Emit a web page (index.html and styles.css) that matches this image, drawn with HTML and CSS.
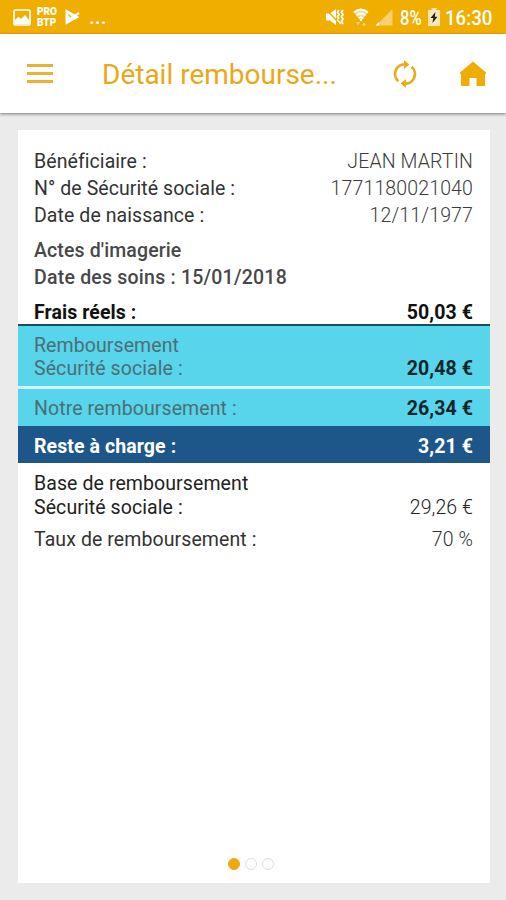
FILE: index.html
```html
<!DOCTYPE html>
<html lang="fr">
<head>
  <meta charset="UTF-8">
  <meta name="viewport" content="width=device-width, initial-scale=1">
  <title>Détail remboursement</title>
  <link rel="stylesheet" href="styles.css">
</head>
<body>

  <div class="statusbar">
    <svg class="ic-picture" width="18" height="17" viewBox="0 0 18 17">
      <rect x="1" y="1" width="16" height="15" rx="1.5" fill="none" stroke="#fff" stroke-width="1.7"/>
      <path d="M2 15V11l3.500-3.500L8 10l4-4 4 5v4z" fill="#fff"/>
    </svg>
    <div class="probtp">PRO<br>BTP</div>
    <svg class="ic-play" width="15" height="16" viewBox="0 0 15 16">
      <path d="M.5.300L14.500 8 .500 15.700z" fill="#fff"/>
      <path d="M3.500 5.500l3.500 3.500 6-5.500" fill="none" stroke="#efae00" stroke-width="1.200"/>
      <path d="M6 9.500L14 4" fill="none" stroke="#fff" stroke-width="2.200"/>
    </svg>
    <div class="more">...</div>

    <svg class="ic-mute" width="20" height="18" viewBox="0 0 20 18">
      <path d="M1 5.500h4l6-4.500v16l-6-4.500H1z" fill="#fff"/>
      <path d="M.5 1l15 15.500" stroke="#efae00" stroke-width="1.400"/>
      <path d="M14 2l-1.500 2.300L14 6.500l-1.500 2.300L14 11M18 2l-1.500 2.300L18 6.500l-1.500 2.300L18 11l-1.500 2.300L18 16" fill="none" stroke="#fff" stroke-width="1.800"/>
      <path d="M12 11.500l4 4.500" stroke="#fff" stroke-width="1.300"/>
    </svg>
    <svg class="ic-wifi" width="16" height="18" viewBox="0 0 16 18">
      <path d="M1 4.500Q8-1.500 15 4.500L8 13z" fill="#fff" opacity=".55"/>
      <path d="M1 4.500Q8-1.500 15 4.500M3.300 7.500Q8 3.500 12.700 7.500M5.600 10.300Q8 8.300 10.400 10.300" fill="none" stroke="#fff" stroke-width="1.700"/>
      <circle cx="8" cy="12" r="1.200" fill="#fff"/>
      <path d="M3 14h4l-2 3.500zM9 17.500h4L11 14z" fill="#fff" opacity=".5"/>
    </svg>
    <svg class="ic-signal" width="18" height="18" viewBox="0 0 18 18">
      <path d="M1 17.500L17.500 1v16.500z" fill="#fff" opacity=".42"/>
      <path d="M.5 17.500l3.500-3.500v3.500z" fill="#fff"/>
    </svg>
    <div class="percent">8%</div>
    <svg class="ic-battery" width="12" height="18" viewBox="0 0 12 18">
      <path d="M3.500 0h5v2H12v16H0V2h3.500z" fill="#fbe7b4"/>
      <path d="M7.500 4L2.500 10h2.700L4.500 15 9.500 8.700H6.800z" fill="#222"/>
    </svg>
    <div class="time">16:30</div>
  </div>

  <div class="toolbar">
    <div class="menu"><i></i><i></i><i></i></div>
    <div class="toolbar-title">Détail rembourse...</div>
    <svg class="ic-sync" width="24" height="28" viewBox="0 0 24 28">
      <path d="M5.400 21.200A9.500 9.500 0 0 1 12.500 4.500M18.600 6.800A9.500 9.500 0 0 1 11.500 23.500" fill="none" stroke="#ebab17" stroke-width="2.700"/>
      <path d="M11 .300l5.500 4.300L11 8.900zM13 19.100l-5.500 4.300L13 27.700z" fill="#ebab17"/>
    </svg>
    <svg class="ic-home" width="28" height="26" viewBox="0 0 28 26">
      <path d="M14 .5L27.500 12l-.8 1H26v12h-8.500v-8h-7v8H2V13H1.300l-.8-1z" fill="#efac05"/>
    </svg>
  </div>

  <div class="card">
    <div class="infos">
      <div class="line"><span>Bénéficiaire :</span><span class="value">JEAN MARTIN</span></div>
      <div class="line"><span>N° de Sécurité sociale :</span><span class="value">1771180021040</span></div>
      <div class="line"><span>Date de naissance :</span><span class="value">12/11/1977</span></div>
    </div>

    <div class="acte">
      <div>Actes d'imagerie</div>
      <div class="soins">Date des soins : 15/01/2018</div>
    </div>

    <div class="row frais"><span>Frais réels :</span><b>50,03 €</b></div>
    <div class="row secu"><span>Remboursement<br>Sécurité sociale :</span><b>20,48 €</b></div>
    <div class="row notre"><span>Notre remboursement :</span><b>26,34 €</b></div>
    <div class="row reste"><span>Reste à charge :</span><b>3,21 €</b></div>
    <div class="row base"><span>Base de remboursement<br>Sécurité sociale :</span><span class="amount">29,26 €</span></div>
    <div class="row taux"><span>Taux de remboursement :</span><span class="amount">70 %</span></div>

    <div class="dots"><i class="active"></i><i></i><i></i></div>
  </div>

</body>
</html>
```
FILE: styles.css
```css
* {
  box-sizing: border-box;
}
body {
  margin: 0;
  height: 900px;
  display: flex;
  flex-direction: column;
  font-family: Roboto, sans-serif;
  font-size: 19.5px;
  background-color: #ebebeb;
  overflow: hidden;
}
svg {
  display: block;
  flex: none;
}

/* status bar */
.statusbar {
  display: flex;
  align-items: center;
  height: 34px;
  padding: 0 14px 0 13px;
  background-color: #efae00;
  color: #fff;
  white-space: nowrap;
}
.probtp {
  width: 20px;
  margin-left: 6px;
  padding-top: 1px;
  font-size: 10px;
  font-weight: 900;
  line-height: 10.5px;
}
.ic-play {
  margin-left: 8px;
}
.more {
  margin-left: 9px;
  font-size: 21px;
  font-weight: 500;
  line-height: 24px;
}
.ic-mute {
  margin-left: auto;
}
.ic-wifi {
  margin-left: 8px;
}
.ic-signal {
  margin-left: 6px;
}
.percent {
  width: 23px;
  margin-left: 7px;
  padding-top: 2px;
  font-size: 20px;
  font-weight: 500;
  transform: scaleX(0.83);
  transform-origin: left;
}
.ic-battery {
  margin-left: 5px;
}
.time {
  width: 47px;
  margin-left: 5px;
  padding-top: 2px;
  font-size: 21px;
  font-weight: 500;
  transform: scaleX(0.89);
  transform-origin: left;
}

/* toolbar */
.toolbar {
  display: flex;
  align-items: center;
  height: 79px;
  padding: 0 19px 0 27px;
  background-color: #fff;
  box-shadow: 0 1px 3px rgba(0,0,0,0.5);
}
.menu {
  display: flex;
  flex-direction: column;
  gap: 5px;
  width: 26px;
}
.menu i {
  height: 3px;
  background-color: #ecb137;
}
.toolbar-title {
  flex: 1;
  margin-left: 49px;
  padding-top: 2px;
  color: #eaa818;
  font-size: 28px;
  white-space: nowrap;
}
.ic-home {
  margin-left: 42px;
}

/* card */
.card {
  display: flex;
  flex-direction: column;
  flex: 1;
  margin: 17px 16px 17px 18px;
  padding-top: 18px;
  background-color: #fff;
  white-space: nowrap;
}
.infos, .acte {
  padding: 0 17px 0 16px;
  line-height: 27px;
}
.line {
  display: flex;
  justify-content: space-between;
  color: #333;
  letter-spacing: 0.07px;
}
.value {
  color: #3c3c3c;
  font-weight: 300;
  letter-spacing: 0.14px;
}
.acte {
  margin-top: 8px;
  color: #484848;
  font-weight: 500;
  letter-spacing: 0.12px;
}
.soins {
  letter-spacing: 0.22px;
}
.row {
  display: flex;
  justify-content: space-between;
  align-items: flex-end;
  padding: 0 17px 0 16px;
  line-height: 23.5px;
  letter-spacing: 0.09px;
}
.row b {
  font-weight: 700;
}
.frais {
  height: 35px;
  border-bottom: 2px solid #174f62;
  font-weight: 700;
  color: #111;
}
.secu {
  height: 60px;
  padding-bottom: 5.5px;
  background-color: #58d4eb;
  color: #4b6f76;
}
.secu b, .notre b {
  color: #10262b;
}
.notre {
  height: 40px;
  padding-bottom: 6px;
  border-top: 3px solid #d2f3fa;
  background-color: #58d4eb;
  color: #4b6f76;
}
.reste {
  height: 37px;
  padding-bottom: 5px;
  background-color: #1d5789;
  color: #fff;
  font-weight: 700;
}
.base {
  margin-top: 9px;
  color: #222;
}
.taux {
  margin-top: 9px;
  color: #333;
}
.amount {
  font-weight: 300;
}
.dots {
  display: flex;
  gap: 5px;
  width: 46px;
  margin: auto auto 13px 210px;
}
.dots i {
  width: 12px;
  height: 12px;
  border: 1px solid #ddd;
  border-radius: 50%;
}
.dots .active {
  background-color: #efa90a;
  border-color: #efa90a;
}
```
